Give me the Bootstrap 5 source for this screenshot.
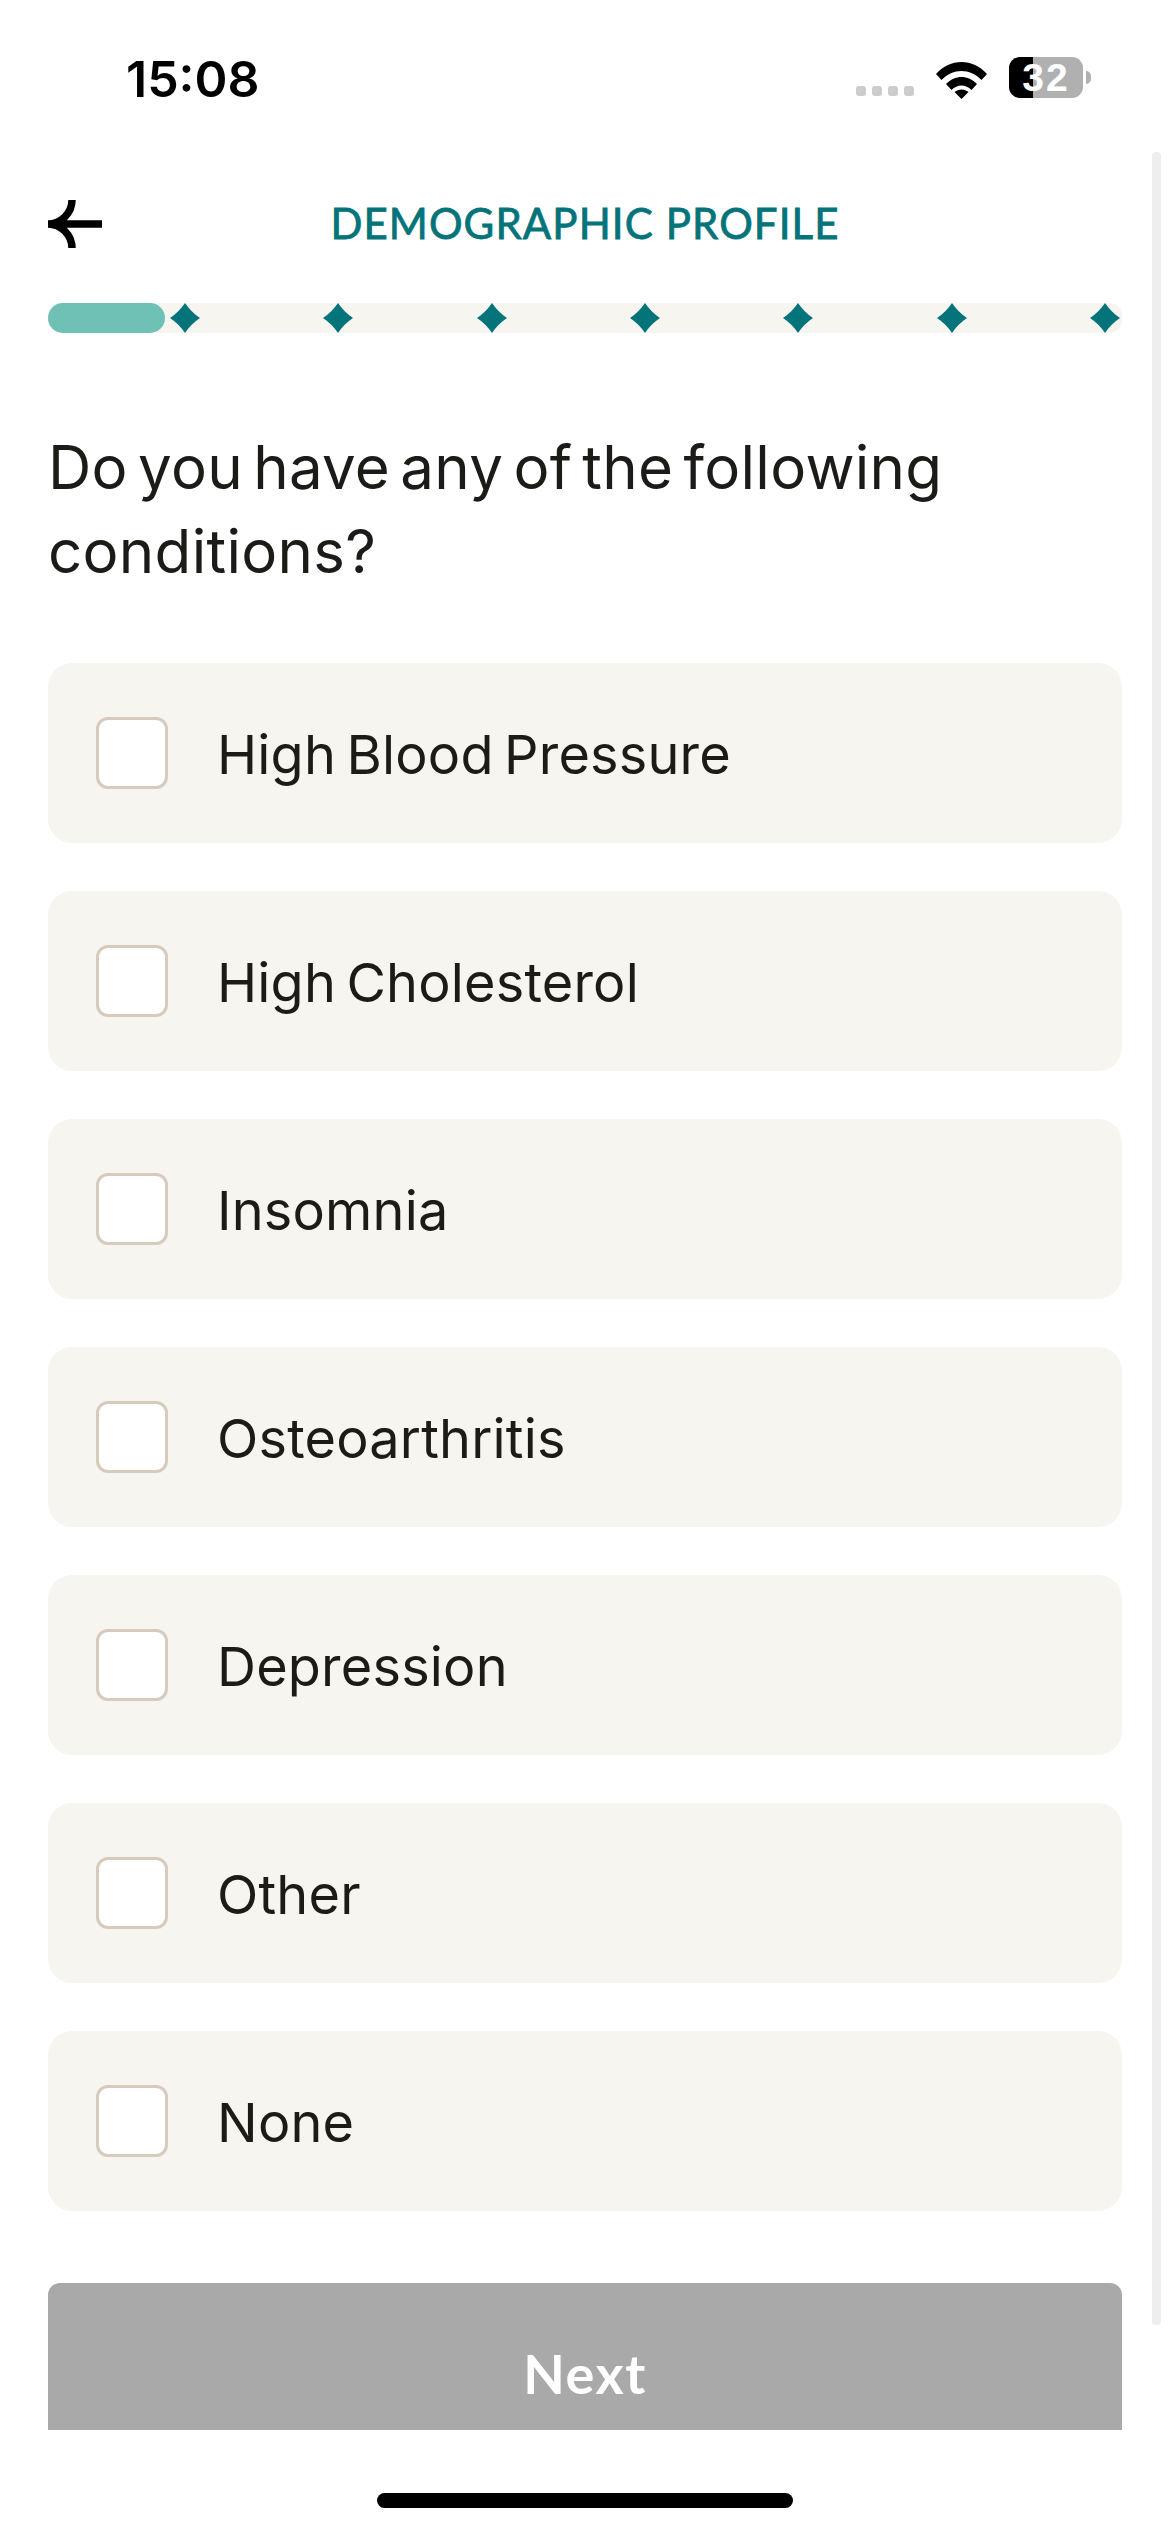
<!DOCTYPE html>
<html lang="en">
<head>
<meta charset="utf-8">
<title>Demographic Profile</title>
<link href="https://cdn.jsdelivr.net/npm/bootstrap@5.3.0/dist/css/bootstrap.min.css" rel="stylesheet">
<style>
html,body{margin:0;width:1170px;height:2532px;overflow:hidden;background:#fff}
body{position:relative;font-family:Inter,"Liberation Sans",sans-serif;color:#1c1b18}
.status-row{height:150px;padding:57px 79px 0 126px}
.clock{font:600 50px/50px Inter,sans-serif;color:#000;margin-top:-3px}
.cell-dots{gap:6px;margin-top:29px}
.cell-dots i{width:10px;height:10px;border-radius:3px;background:#ccc;display:block}
.status-right{gap:22px}
.batt{width:74px;height:41px;border-radius:11px;background:linear-gradient(90deg,#000 24px,#b0b0b0 24px);color:#fff;font:700 39px/41px "Liberation Sans",sans-serif;text-align:center;letter-spacing:2px}
.batt-wrap{gap:3px}
.batt-cap{width:5px;height:13px;background:#b0b0b0;border-radius:0 6px 6px 0}
.nav-row{height:48px;margin:50px 48px 0}
.nav-title{font:400 42px/46px Lato,sans-serif;color:#04737a;letter-spacing:1.1px;-webkit-text-stroke:.8px #04737a}
.back-btn{position:absolute;left:0;top:0;line-height:0}
.track{height:30px;margin:55px 48px 0;background:#f6f5ef;border-radius:12px;padding-left:122px;padding-right:2px}
.fill{position:absolute;left:0;top:0;bottom:0;width:117px;background:#6fc0b5;border-radius:15px}
.q{font:400 60px/84px Inter,sans-serif;margin:92px 48px 0;color:#1c1b18;letter-spacing:.3px;word-spacing:-7px}
.opts{margin:70px 48px 0;gap:48px}
.opt{height:180px;border-radius:24px;background:#f6f5ef;padding-left:48px;gap:49px;font:400 54px/1 Inter,sans-serif;letter-spacing:.2px;word-spacing:-5px}
.opt-label{padding-top:4px}
.box{width:72px;height:72px;border:3px solid #d6cbbd;background:#fff;border-radius:12px;flex:none}
.btn-clip{height:147px;margin:72px 48px 0;overflow:hidden;border-radius:12px 12px 0 0}
.next-btn{height:182px;width:100%;background:#a9a9a9;border:0;border-radius:0;color:#fff;font:700 54px/1 Lato,sans-serif;letter-spacing:1.5px}
.home{position:absolute;left:377px;top:2493px;width:416px;height:15px;background:#000;border-radius:8px}
.sbar{position:absolute;right:9px;top:152px;width:9px;height:2173px;background:#eee;border-radius:4px}
</style>
</head>
<body>
<div class="status-row d-flex justify-content-between align-items-start">
  <div class="clock">15:08</div>
  <div class="status-right d-flex align-items-start">
    <div class="cell-dots d-flex"><i></i><i></i><i></i><i></i></div>
    <svg width="51" height="38" viewBox="0 0 51 38" class="mt-1"><path d="M0 13 C14 -3 37 -3 51 13 L45.500 19 C34 7 17 7 5.500 19Z M10 23 C19 13.500 32 13.500 41 23 L35.500 29 C29.500 23 21.500 23 15.500 29Z M25.500 38 L18.500 31 C22.500 27.500 28.500 27.500 32.500 31Z" fill="#000"/></svg>
    <div class="batt-wrap d-flex align-items-center">
      <div class="batt">32</div>
      <div class="batt-cap"></div>
    </div>
  </div>
</div>
<div class="nav-row position-relative d-flex justify-content-center">
  <div class="back-btn"><svg width="54" height="48" viewBox="0 0 54 48"><path d="M24 0 C24 13 13 24 0 24 C13 24 24 35 24 48 M0 24 H54" fill="none" stroke="#000" stroke-width="7.500"/></svg></div>
  <div class="nav-title">DEMOGRAPHIC PROFILE</div>
</div>
<div class="track position-relative d-flex justify-content-between align-items-center">
  <div class="fill"></div>
  <svg class="position-relative" width="30" height="30" viewBox="0 0 30 30"><path d="M15 0 Q21 9 30 15 Q21 21 15 30 Q9 21 0 15 Q9 9 15 0Z" fill="#04737a"/></svg>
  <svg width="30" height="30" viewBox="0 0 30 30"><path d="M15 0 Q21 9 30 15 Q21 21 15 30 Q9 21 0 15 Q9 9 15 0Z" fill="#04737a"/></svg>
  <svg width="30" height="30" viewBox="0 0 30 30"><path d="M15 0 Q21 9 30 15 Q21 21 15 30 Q9 21 0 15 Q9 9 15 0Z" fill="#04737a"/></svg>
  <svg width="30" height="30" viewBox="0 0 30 30"><path d="M15 0 Q21 9 30 15 Q21 21 15 30 Q9 21 0 15 Q9 9 15 0Z" fill="#04737a"/></svg>
  <svg width="30" height="30" viewBox="0 0 30 30"><path d="M15 0 Q21 9 30 15 Q21 21 15 30 Q9 21 0 15 Q9 9 15 0Z" fill="#04737a"/></svg>
  <svg width="30" height="30" viewBox="0 0 30 30"><path d="M15 0 Q21 9 30 15 Q21 21 15 30 Q9 21 0 15 Q9 9 15 0Z" fill="#04737a"/></svg>
  <svg width="30" height="30" viewBox="0 0 30 30"><path d="M15 0 Q21 9 30 15 Q21 21 15 30 Q9 21 0 15 Q9 9 15 0Z" fill="#04737a"/></svg>
</div>
<div class="q">Do you have any of the following conditions?</div>
<div class="opts d-flex flex-column">
  <div class="opt d-flex align-items-center"><span class="box"></span><span class="opt-label">High Blood Pressure</span></div>
  <div class="opt d-flex align-items-center"><span class="box"></span><span class="opt-label">High Cholesterol</span></div>
  <div class="opt d-flex align-items-center"><span class="box"></span><span class="opt-label">Insomnia</span></div>
  <div class="opt d-flex align-items-center"><span class="box"></span><span class="opt-label">Osteoarthritis</span></div>
  <div class="opt d-flex align-items-center"><span class="box"></span><span class="opt-label">Depression</span></div>
  <div class="opt d-flex align-items-center"><span class="box"></span><span class="opt-label">Other</span></div>
  <div class="opt d-flex align-items-center"><span class="box"></span><span class="opt-label">None</span></div>
</div>
<div class="btn-clip"><button class="btn next-btn" type="button">Next</button></div>
<div class="home"></div>
<div class="sbar"></div>
<script src="https://cdn.jsdelivr.net/npm/bootstrap@5.3.0/dist/js/bootstrap.bundle.min.js"></script>
</body>
</html>
